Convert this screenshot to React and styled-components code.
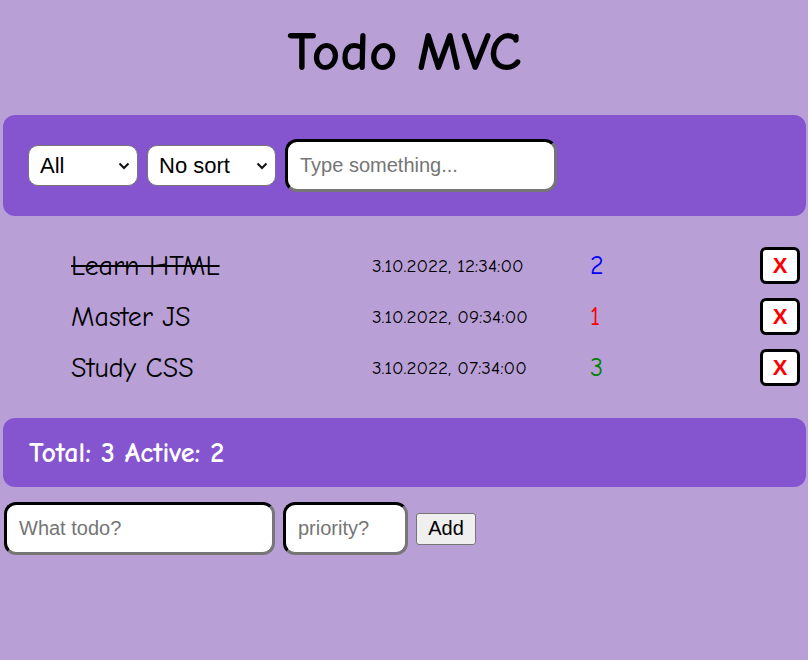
import React from "react";
import styled, { createGlobalStyle } from "styled-components";

const Global = createGlobalStyle`
  html, body { margin: 0; padding: 0; }
  body {
    background: #b89fd6;
    font-family: "Comic Sans MS", "Comic Neue", "Open Sans", sans-serif;
    width: 808px;
    height: 660px;
    overflow: hidden;
  }
`;

const chevron =
  "url(\"data:image/svg+xml;utf8,<svg xmlns='http://www.w3.org/2000/svg' width='12' height='8' viewBox='0 0 12 8'><path d='M1.5 1.5 L6 6 L10.5 1.5' fill='none' stroke='%23111' stroke-width='2'/></svg>\")";

const Page = styled.div`
  padding: 0 2px 0 3px;
  display: flex;
  flex-direction: column;
`;

const Title = styled.h1`
  margin: 0;
  padding-top: 20px;
  height: 115px;
  box-sizing: border-box;
  text-align: center;
  font-size: 55px;
  font-weight: bold;
  line-height: 64px;
  color: #000;
`;

const Panel = styled.div`
  background: #8455cf;
  border-radius: 12px;
  display: flex;
  align-items: center;
  gap: 9px;
  padding: ${(p) => p.$pad};
`;

const Summary = styled.span`
  color: #fff;
  font-size: 28px;
  font-weight: bold;
`;

const Select = styled.select`
  appearance: none;
  -webkit-appearance: none;
  box-sizing: border-box;
  width: ${(p) => p.$w}px;
  height: 41px;
  border: 1px solid #767676;
  border-radius: 10px;
  background: #fff ${chevron} no-repeat right 7px center;
  font-family: Arial, "Liberation Sans", sans-serif;
  font-size: 22px;
  color: #000;
  padding: 0 24px 0 11px;
`;

const Input = styled.input`
  box-sizing: border-box;
  width: ${(p) => p.$w}px;
  height: 53px;
  border: 3px inset #767676;
  border-top-color: #1f1f1f;
  border-left-color: #1f1f1f;
  border-radius: 12px;
  background: #fff;
  font-family: Arial, "Liberation Sans", sans-serif;
  font-size: 20px;
  padding: 0 12px;
  color: #000;
  &::placeholder { color: #757575; }
`;

const List = styled.ul`
  list-style: none;
  margin: 24px 0 25px;
  padding: 0;
`;

const Row = styled.li`
  display: grid;
  grid-template-columns: 301px 218px 1fr 40px;
  align-items: center;
  height: 51px;
  padding: 0 6px 0 68px;
`;

const ItemText = styled.span`
  font-size: 28px;
  color: #000;
  text-decoration: ${(p) => (p.$done ? "line-through" : "none")};
`;

const DateText = styled.span`
  font-size: 19px;
  color: #000;
`;

const Priority = styled.span`
  font-size: 26px;
  color: ${(p) => p.$color};
`;

const DeleteButton = styled.button`
  box-sizing: border-box;
  width: 40px;
  height: 37px;
  border: 3px solid #000;
  border-radius: 6px;
  background: #fff;
  color: #ff0000;
  font-family: Arial, "Liberation Sans", sans-serif;
  font-weight: bold;
  font-size: 22px;
  padding: 0;
  display: flex;
  align-items: center;
  justify-content: center;
`;

const AddRow = styled.div`
  display: flex;
  align-items: center;
  gap: 8px;
  margin-top: 15px;
  padding-left: 1px;
`;

const AddButton = styled.button`
  box-sizing: border-box;
  width: 60px;
  height: 32px;
  background: #efefef;
  border: 1px solid #767676;
  border-radius: 3px;
  font-family: Arial, "Liberation Sans", sans-serif;
  font-size: 20px;
  color: #000;
  padding: 0;
`;

const todos = [
  { text: "Learn HTML", date: "3.10.2022, 12:34:00", pr: 2, color: "#0000ff", done: true },
  { text: "Master JS", date: "3.10.2022, 09:34:00", pr: 1, color: "#ff0000", done: false },
  { text: "Study CSS", date: "3.10.2022, 07:34:00", pr: 3, color: "#008000", done: false },
];

export default function App() {
  return (
    <>
      <Global />
      <Page>
        <Title>Todo MVC</Title>
        <Panel $pad="24px 25px">
          <Select $w={110} defaultValue="All">
            <option>All</option>
            <option>Active</option>
            <option>Done</option>
          </Select>
          <Select $w={129} defaultValue="No sort">
            <option>No sort</option>
            <option>By date</option>
            <option>By priority</option>
          </Select>
          <Input $w={272} placeholder="Type something..." />
        </Panel>
        <List>
          {todos.map((t) => (
            <Row key={t.text}>
              <ItemText $done={t.done}>{t.text}</ItemText>
              <DateText>{t.date}</DateText>
              <Priority $color={t.color}>{t.pr}</Priority>
              <DeleteButton>X</DeleteButton>
            </Row>
          ))}
        </List>
        <Panel $pad="0 26px" style={{ height: 69 }}>
          <Summary>Total: 3 Active: 2</Summary>
        </Panel>
        <AddRow>
          <Input $w={271} placeholder="What todo?" />
          <Input $w={125} placeholder="priority?" />
          <AddButton>Add</AddButton>
        </AddRow>
      </Page>
    </>
  );
}
